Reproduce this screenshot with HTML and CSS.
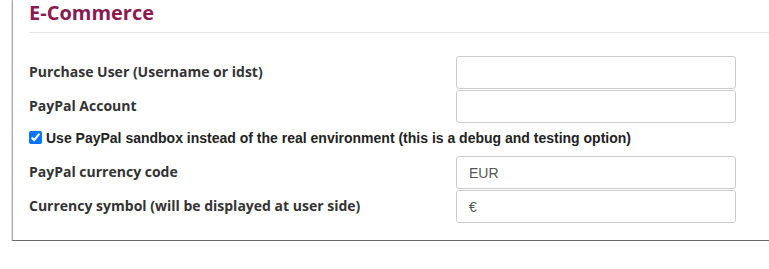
FILE: index.html
```html
<!DOCTYPE html>
<html lang="en">
<head>
  <meta charset="UTF-8">
  <title>E-Commerce settings</title>
  <link rel="stylesheet" href="styles.css">
</head>
<body>
  <div class="panel">
    <h2 class="panel-title">E-Commerce</h2>
    <form class="settings">
      <div class="row">
        <label class="row-label" for="purchase-user">Purchase User (Username or idst)</label>
        <input id="purchase-user" class="field" type="text" value="">
      </div>
      <div class="row">
        <label class="row-label" for="paypal-account">PayPal Account</label>
        <input id="paypal-account" class="field" type="text" value="">
      </div>
      <div class="check-row">
        <input id="sandbox" type="checkbox" checked>
        <label for="sandbox">Use PayPal sandbox instead of the real environment (this is a debug and testing option)</label>
      </div>
      <div class="row">
        <label class="row-label" for="currency-code">PayPal currency code</label>
        <input id="currency-code" class="field" type="text" value="EUR">
      </div>
      <div class="row">
        <label class="row-label" for="currency-symbol">Currency symbol (will be displayed at user side)</label>
        <input id="currency-symbol" class="field" type="text" value="€">
      </div>
    </form>
  </div>
</body>
</html>
```

FILE: styles.css
```css
html, body {
  margin: 0;
  padding: 0;
  background: #fff;
  overflow: hidden;
}
body {
  font-family: "Open Sans", sans-serif;
  color: #333;
}
.panel {
  margin-left: 12px;
  padding: 0 0 16px 16px;
  border-left: 1px solid #aaa;
  border-bottom: 1px solid #666;
  box-shadow: 0 1px 2px rgba(0, 0, 0, 0.35);
  background: #fff;
}
.panel-title {
  margin: 0;
  font-size: 20px;
  line-height: 26px;
  font-weight: 700;
  color: #8a1a50;
  border-bottom: 1px solid #e6e6e6;
  padding-bottom: 6px;
}
.settings {
  padding-top: 23px;
}
.row {
  display: flex;
  align-items: flex-start;
  height: 34px;
}
.row-label {
  width: 427px;
  padding-top: 6px;
  font-size: 14px;
  font-weight: 700;
}
.field {
  box-sizing: border-box;
  width: 280px;
  height: 33px;
  padding: 0 12px;
  border: 1px solid #ccc;
  border-radius: 3px;
  font-family: "Liberation Sans", Arial, sans-serif;
  font-size: 14px;
  color: #555;
}
.check-row {
  display: flex;
  align-items: center;
  height: 27px;
  padding-bottom: 5px;
  font-family: "Liberation Sans", Arial, sans-serif;
  font-size: 14px;
  font-weight: 700;
  color: #222;
}
.check-row input {
  margin: 0 4px 0 0;
  width: 13px;
  height: 13px;
}
```
